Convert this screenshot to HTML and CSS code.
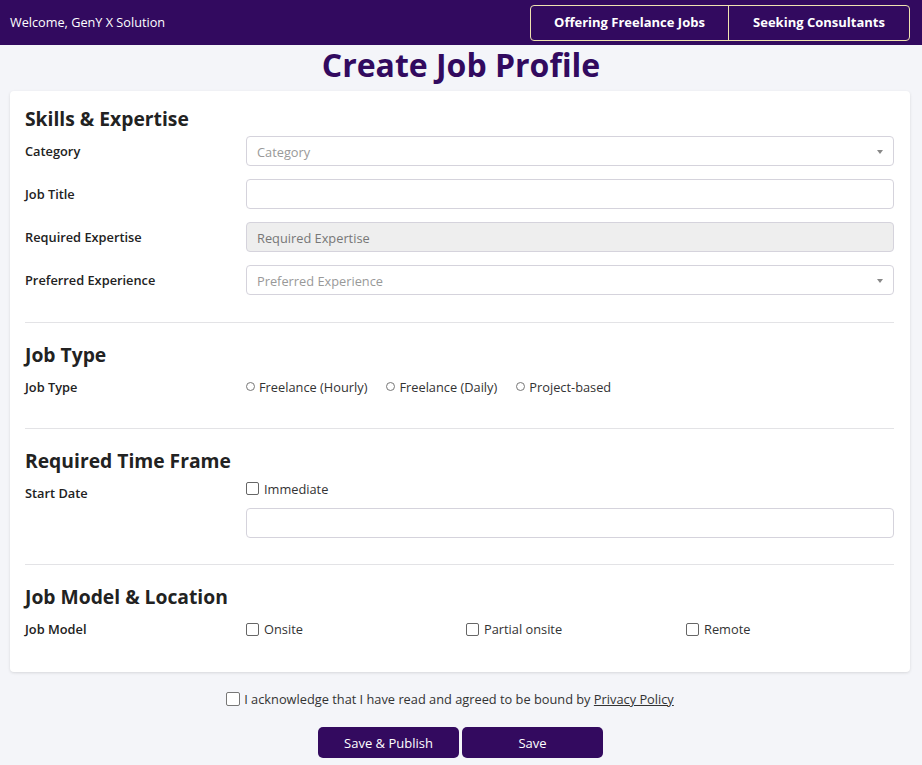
FILE: index.html
```html
<!DOCTYPE html>
<html>
<head>
<meta charset="utf-8">
<title>Create Job Profile</title>
<link rel="stylesheet" href="styles.css">
</head>
<body>
<header class="topbar">
  <div class="welcome">Welcome, GenY X Solution</div>
  <nav class="topnav">
    <a class="navbtn nb1">Offering Freelance Jobs</a>
    <a class="navbtn nb2">Seeking Consultants</a>
  </nav>
</header>
<h1 class="page-title">Create Job Profile</h1>
<main class="card">
  <section class="section">
    <h2 class="sec-title">Skills &amp; Expertise</h2>
    <div class="row">
      <label class="lbl">Category</label>
      <div class="field select"><span class="ph">Category</span><span class="caret"></span></div>
    </div>
    <div class="row">
      <label class="lbl">Job Title</label>
      <div class="field"></div>
    </div>
    <div class="row">
      <label class="lbl">Required Expertise</label>
      <div class="field disabled"><span class="ph dark">Required Expertise</span></div>
    </div>
    <div class="row">
      <label class="lbl">Preferred Experience</label>
      <div class="field select"><span class="ph">Preferred Experience</span><span class="caret"></span></div>
    </div>
  </section>
  <section class="section">
    <h2 class="sec-title">Job Type</h2>
    <div class="row">
      <label class="lbl">Job Type</label>
      <div class="radios">
        <span class="opt"><span class="radio"></span>Freelance (Hourly)</span>
        <span class="opt"><span class="radio"></span>Freelance (Daily)</span>
        <span class="opt"><span class="radio"></span>Project-based</span>
      </div>
    </div>
  </section>
  <section class="section">
    <h2 class="sec-title">Required Time Frame</h2>
    <div class="row">
      <label class="lbl">Start Date</label>
      <div class="stack">
        <span class="chk-opt"><span class="chk"></span>Immediate</span>
        <div class="field"></div>
      </div>
    </div>
  </section>
  <section class="section last">
    <h2 class="sec-title">Job Model &amp; Location</h2>
    <div class="row">
      <label class="lbl">Job Model</label>
      <div class="checks">
        <span class="chk-opt"><span class="chk"></span>Onsite</span>
        <span class="chk-opt"><span class="chk"></span>Partial onsite</span>
        <span class="chk-opt"><span class="chk"></span>Remote</span>
      </div>
    </div>
  </section>
</main>
<div class="ack">
  <span class="chk big"></span>
  <span>I acknowledge that I have read and agreed to be bound by <a class="link">Privacy Policy</a></span>
</div>
<div class="actions">
  <button class="btn">Save &amp; Publish</button>
  <button class="btn">Save</button>
</div>
</body>
</html>
```
FILE: styles.css
```css
* { box-sizing: border-box; }
html, body { margin: 0; padding: 0; }
body {
  background: #f4f5f9;
  font-family: "Open Sans", "Noto Sans", sans-serif;
  color: #222;
  font-size: 13px;
}
.topbar {
  height: 45px;
  background: #320a5f;
  display: flex;
  align-items: center;
  justify-content: space-between;
  padding: 0 12px 0 10px;
}
.welcome { color: #fff; font-size: 12.7px; margin-top: -1px; }
.topnav {
  display: flex;
  border: 1px solid #efe3b0;
  border-radius: 4px;
  height: 36px;
}
.navbtn {
  color: #fff;
  font-weight: 700;
  font-size: 13px;
  display: flex;
  align-items: center;
  justify-content: center;
  padding-bottom: 1px;
}
.nb1 { width: 198px; border-right: 1px solid #efe3b0; }
.nb2 { width: 180px; }
.page-title {
  margin: 0;
  text-align: center;
  color: #320a5f;
  font-size: 32px;
  font-weight: 700;
  line-height: 40px;
  height: 46px;
}
.card {
  margin: 0 12px 0 10px;
  background: #fff;
  border-radius: 4px;
  box-shadow: 0 1px 3px rgba(0,0,0,0.12);
  padding: 15px 16px 2px 15px;
}
.section {
  border-bottom: 1px solid #e3e3e6;
  padding-bottom: 26px;
  margin-bottom: 19px;
}
.section:first-child { padding-bottom: 27px; }
.section.last { border-bottom: none; margin-bottom: 0; }
.sec-title {
  margin: 0 0 4px 0;
  font-size: 19.3px;
  line-height: 26px;
  font-weight: 700;
  color: #222;
}
.row {
  display: grid;
  grid-template-columns: 221px 1fr;
  margin-bottom: 13px;
}
.section .row:last-child { margin-bottom: 0; }
.lbl {
  font-weight: 600;
  font-size: 12.8px;
  line-height: 18px;
  padding-top: 6px;
  color: #222;
}
.field {
  height: 30px;
  border: 1px solid #d5d3dc;
  border-radius: 4px;
  background: #fff;
  display: flex;
  align-items: center;
  padding: 0 10px;
  position: relative;
}
.field.disabled { background: #eeeeee; }
.ph { color: #999; font-size: 12.8px; padding-top: 2px; }
.ph.dark { color: #777; }
.caret {
  position: absolute;
  right: 10px;
  top: 13px;
  width: 0; height: 0;
  border-left: 3px solid transparent;
  border-right: 3px solid transparent;
  border-top: 4px solid #888;
}
.radios {
  display: flex;
  align-items: center;
  height: 30px;
  gap: 19px;
  font-size: 12.8px;
  color: #333;
}
.opt { display: flex; align-items: center; }
.radio {
  width: 9px; height: 9px;
  border: 1px solid #777;
  border-radius: 50%;
  margin-right: 4px;
  margin-top: -1px;
}
.stack { display: flex; flex-direction: column; }
.stack .chk-opt { height: 21px; margin-bottom: 9px; }
.chk-opt {
  display: flex;
  align-items: center;
  font-size: 12.8px;
  color: #333;
}
.chk {
  width: 13px; height: 13px;
  border: 1px solid #666;
  border-radius: 2px;
  margin-right: 5px;
  background: #fff;
}
.checks {
  display: grid;
  grid-template-columns: 220px 220px 1fr;
  height: 30px;
  align-items: center;
}
.ack {
  display: flex;
  justify-content: center;
  align-items: center;
  margin-top: 18px;
  padding-right: 22px;
  font-size: 12.8px;
  color: #333;
  height: 18px;
}
.chk.big { width: 14px; height: 14px; margin-right: 4px; border-color: #777; }
.link { text-decoration: underline; color: #333; }
.actions {
  display: flex;
  justify-content: center;
  gap: 3px;
  margin-top: 19px;
  padding-right: 1px;
}
.btn {
  width: 141px;
  height: 31px;
  background: #330a5f;
  color: #fff;
  border: none;
  border-radius: 5px;
  font-family: "Open Sans", "Noto Sans", sans-serif;
  font-size: 13px;
}
```
